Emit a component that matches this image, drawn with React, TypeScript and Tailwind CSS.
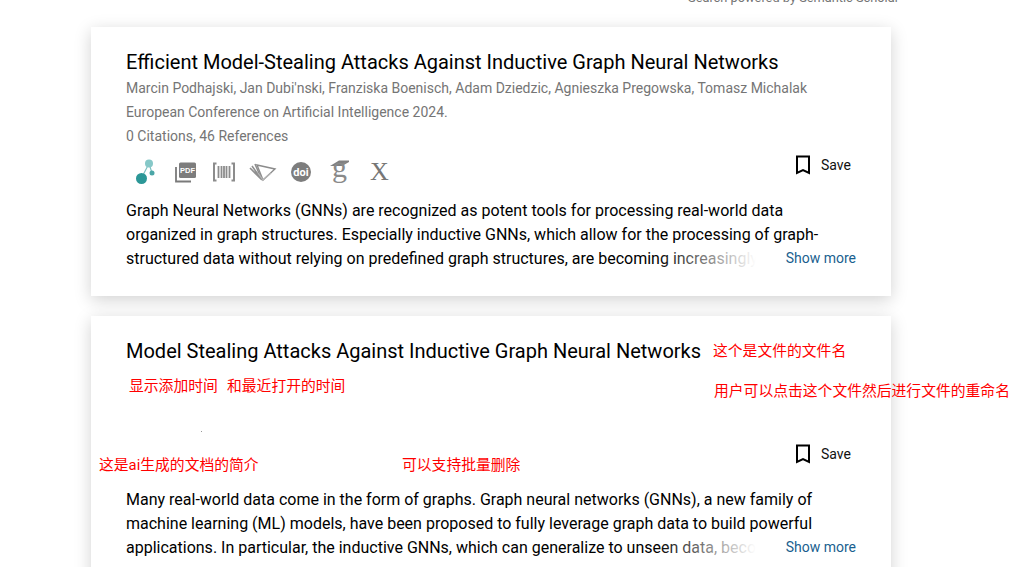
import React from 'react';

const PaperIcons: React.FC = () => (
  <div className="ml-[9px] flex h-[32px] items-center">
    {/* connected papers */}
    <svg width="22" height="26" viewBox="0 0 22 26">
      <path d="M6.5 19 L14 4.5 L17 14" stroke="#7dbfc0" strokeWidth="1.2" fill="none" />
      <circle cx="6.5" cy="19.5" r="5.5" fill="#2c9797" />
      <circle cx="14" cy="4.5" r="4" fill="#86c8c8" />
      <circle cx="17" cy="14" r="2.5" fill="#4ba6a7" />
    </svg>
    {/* pdf */}
    <svg className="ml-[17px]" width="23" height="21" viewBox="0 0 23 21">
      <path d="M2 5v14.5h15" stroke="#7a7a7a" strokeWidth="1.8" fill="none" />
      <rect x="5" y="0.5" width="17" height="15.5" rx="1.5" fill="#7d7d7d" />
      <text x="13.5" y="11.2" textAnchor="middle" fill="#fff" fontSize="7.5" fontWeight="700" fontFamily="'Liberation Sans', sans-serif">PDF</text>
    </svg>
    {/* semantic reader */}
    <svg className="ml-[15px]" width="24" height="20" viewBox="0 0 24 20" stroke="#8c8c8c" fill="none">
      <path d="M4.5 1.5H2v17h2.5M19.5 1.5H22v17h-2.5" strokeWidth="2" />
      <path d="M6.5 4v12M9.5 4v12M12 4v12M14.5 4v12M17.5 4v12" strokeWidth="1.8" />
    </svg>
    {/* semantic scholar */}
    <svg className="ml-[13px]" width="28" height="20" viewBox="0 0 28 20" fill="none">
      <path d="M8 3 L26 7 L14 18 Z" stroke="#8c8c8c" strokeWidth="1.4" />
      <path d="M1 6 L13 18 M3 4 L13 18 M6 2 L13 18" stroke="#8f8f8f" strokeWidth="1.6" />
      <path d="M9 11 L14 18 L22 11" stroke="#b5b5b5" strokeWidth="1.2" />
    </svg>
    {/* doi */}
    <div className="ml-[14px] flex h-[20px] w-[20px] items-center justify-center rounded-full bg-[#7d7d7d] text-[11px] font-bold leading-none text-white">
      doi
    </div>
    {/* google scholar */}
    <svg className="ml-[19px]" width="22" height="26" viewBox="0 0 22 26">
      <path d="M0 7 L9 1.5 H19 V3 L12 7 Z" fill="#808080" />
      <text x="2" y="18" fill="#8a8a8a" fontSize="30" fontFamily="'Liberation Serif', serif">g</text>
    </svg>
    {/* x */}
    <span className="ml-[18px] flex h-[26px] w-[19px] items-center justify-center font-['Liberation_Serif',serif] text-[26px] leading-none text-[#777777]">
      X
    </span>
  </div>
);

const SaveButton: React.FC = () => (
  <div className="flex items-center gap-[10px] pr-[5px] text-[14px] leading-[20px] text-[#111111]">
    <svg width="16" height="20" viewBox="0 0 16 20" fill="none" stroke="#000" strokeWidth="2">
      <path d="M2 1.5h12v16.5l-6-3-6 3z" />
    </svg>
    Save
  </div>
);

type PaperCardProps = {
  title: string;
  authors?: string;
  venue?: string;
  stats?: string;
  showIcons?: boolean;
  lines: string[];
  lastLine: string;
};

const PaperCard: React.FC<PaperCardProps> = ({ title, authors, venue, stats, showIcons, lines, lastLine }) => (
  <div className="mb-[20px] h-[269px] w-[800px] shrink-0 bg-white px-[35px] pt-[20px] shadow-[0_4px_16px_rgba(0,0,0,0.18)]">
    <h2 className="h-[30px] text-[20px] leading-[30px] whitespace-nowrap text-black">{title}</h2>
    <div className="-mt-[1px] h-[72px] text-[14px] leading-[24px] text-[#757575]">
      <div className="h-[24px] whitespace-nowrap">{authors}</div>
      <div className="h-[24px] whitespace-nowrap">{venue}</div>
      <div className="h-[24px] whitespace-nowrap">{stats}</div>
    </div>
    <div className="mt-[8px] flex h-[32px] items-center justify-between">
      {showIcons ? <PaperIcons /> : <div />}
      <div className="mb-[14px]">
        <SaveButton />
      </div>
    </div>
    <div className="mt-[11px] text-[16px] leading-[24px] text-black">
      {lines.map((line) => (
        <div key={line} className="whitespace-nowrap">{line}</div>
      ))}
      <div className="relative flex w-[730px] justify-between whitespace-nowrap">
        <span>{lastLine}</span>
        <div className="absolute inset-y-0 left-[530px] w-[100px] bg-gradient-to-r from-transparent to-white" />
        <div className="absolute inset-y-0 left-[630px] w-[30px] bg-white" />
        <span className="relative text-[14px] leading-[22px] text-[#1a5f8f]">Show more</span>
      </div>
    </div>
  </div>
);

const Note: React.FC<{ className: string; children: React.ReactNode }> = ({ className, children }) => (
  <div className={`absolute text-[14.8px] leading-[20px] whitespace-nowrap text-[#ff0000] ${className}`}>{children}</div>
);

export default function App() {
  return (
    <div className="relative h-[567px] w-[1027px] overflow-hidden bg-white font-['Roboto','Noto_Sans_CJK_SC',sans-serif]">
      <div className="h-[27px] pl-[91px]">
        <div className="flex h-[6px] w-[808px] items-end justify-end overflow-hidden">
          <span className="shrink-0 text-[12.8px] leading-[16px] text-[#757575]">Search powered by Semantic Scholar</span>
        </div>
      </div>
      <div className="flex flex-col pl-[91px]">
        <PaperCard
          title="Efficient Model-Stealing Attacks Against Inductive Graph Neural Networks"
          authors="Marcin Podhajski, Jan Dubi'nski, Franziska Boenisch, Adam Dziedzic, Agnieszka Pregowska, Tomasz Michalak"
          venue="European Conference on Artificial Intelligence 2024."
          stats="0 Citations, 46 References"
          showIcons
          lines={[
            'Graph Neural Networks (GNNs) are recognized as potent tools for processing real-world data',
            'organized in graph structures. Especially inductive GNNs, which allow for the processing of graph-',
          ]}
          lastLine="structured data without relying on predefined graph structures, are becoming increasingly"
        />
        <PaperCard
          title="Model Stealing Attacks Against Inductive Graph Neural Networks"
          lines={[
            'Many real-world data come in the form of graphs. Graph neural networks (GNNs), a new family of',
            'machine learning (ML) models, have been proposed to fully leverage graph data to build powerful',
          ]}
          lastLine="applications. In particular, the inductive GNNs, which can generalize to unseen data, become"
        />
      </div>
      <Note className="left-[713px] top-[341px]">这个是文件的文件名</Note>
      <Note className="left-[129px] top-[376px]">显示添加时间</Note>
      <Note className="left-[227px] top-[376px]">和最近打开的时间</Note>
      <Note className="left-[714px] top-[381px]">用户可以点击这个文件然后进行文件的重命名</Note>
      <Note className="left-[99px] top-[455px]">这是ai生成的文档的简介</Note>
      <Note className="left-[402px] top-[455px]">可以支持批量删除</Note>
      <div className="absolute left-[201px] top-[431px] h-px w-px bg-[#999999]" />
    </div>
  );
}
